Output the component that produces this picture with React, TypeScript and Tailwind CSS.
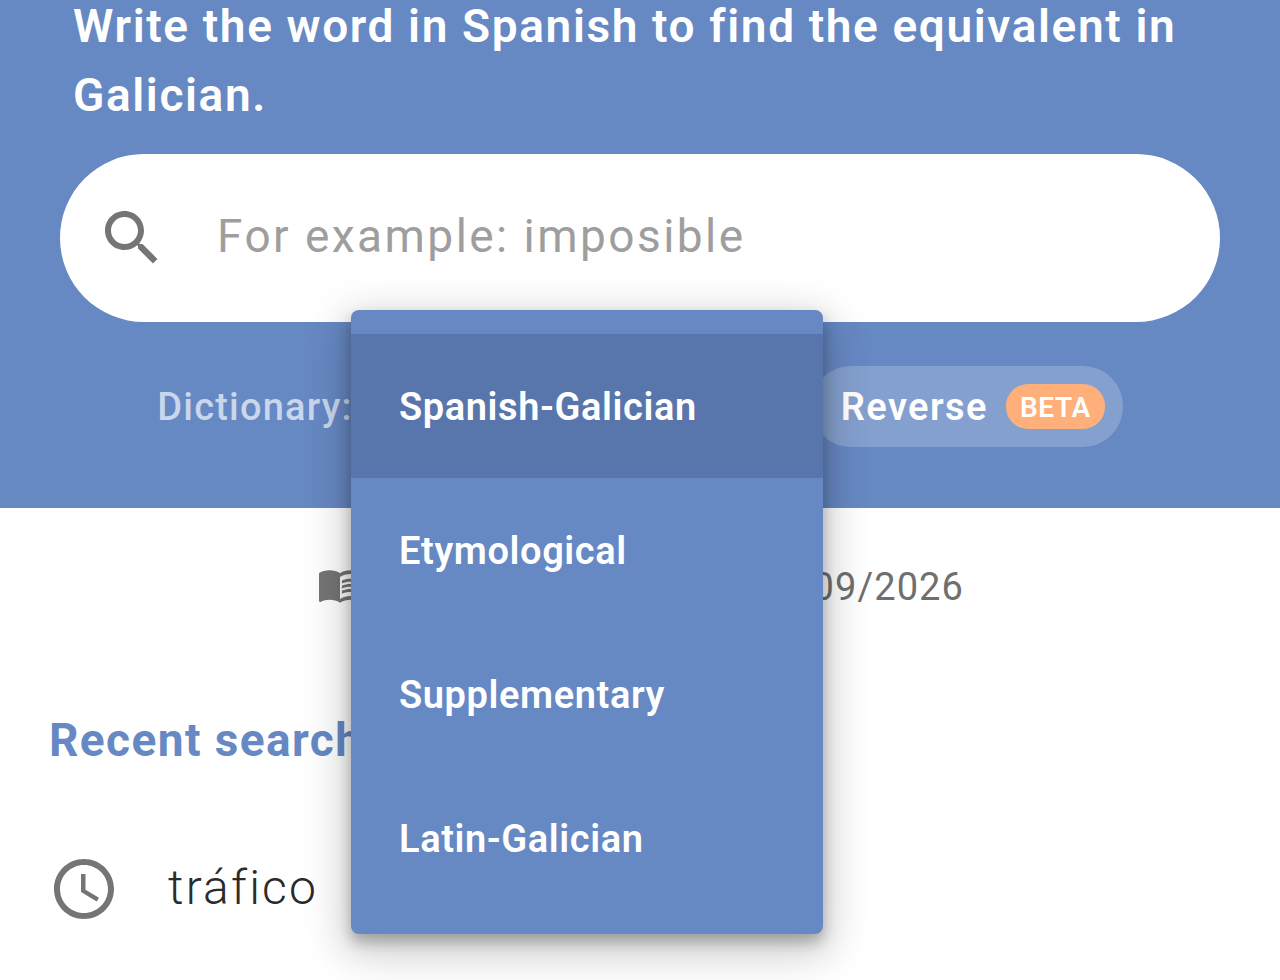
const roboto = "font-['Roboto',sans-serif]";

function SearchIcon() {
  return (
    <svg viewBox="3 3 18 18" className="w-[54px] h-[54px] fill-[#757575]">
      <path d="M15.5 14h-.79l-.28-.27C15.41 12.59 16 11.11 16 9.5 16 5.91 13.09 3 9.5 3S3 5.91 3 9.5 5.91 16 9.5 16c1.61 0 3.09-.59 4.23-1.57l.27.28v.79l5 4.99L20.49 19l-4.99-5zm-6 0C7.01 14 5 11.99 5 9.5S7.01 5 9.5 5 14 7.01 14 9.5 11.99 14 9.5 14z" />
    </svg>
  );
}

function BookIcon() {
  return (
    <svg viewBox="1 4.4 22 17.2" className="w-[42px] h-[33px] fill-[#757575] shrink-0">
      <path d="M21 5c-1.11-.35-2.33-.5-3.5-.5-1.95 0-4.05.4-5.5 1.5-1.45-1.1-3.55-1.5-5.5-1.5S2.45 4.9 1 6v14.65c0 .25.25.5.5.5.1 0 .15-.05.25-.05C3.1 20.45 5.05 20 6.5 20c1.95 0 4.05.4 5.5 1.5 1.35-.85 3.8-1.5 5.5-1.5 1.65 0 3.35.3 4.75 1.05.1.05.15.05.25.05.25 0 .5-.25.5-.5V6c-.6-.45-1.25-.75-2-1zm0 13.5c-1.1-.35-2.3-.5-3.5-.5-1.7 0-4.15.65-5.5 1.5V8c1.35-.85 3.8-1.5 5.5-1.5 1.2 0 2.4.15 3.5.5v11.5z" />
      <path d="M17.5 10.5c.88 0 1.73.09 2.5.26V9.24c-.79-.15-1.64-.24-2.5-.24-1.7 0-3.24.29-4.5.83v1.66c1.13-.64 2.7-.99 4.5-.99zM13 12.49v1.66c1.13-.64 2.7-.99 4.5-.99.88 0 1.73.09 2.5.26V11.9c-.79-.15-1.64-.24-2.5-.24-1.7 0-3.24.3-4.5.83zM17.5 14.33c-1.7 0-3.24.29-4.5.83v1.66c1.13-.64 2.7-.99 4.5-.99.88 0 1.73.09 2.5.26v-1.52c-.79-.16-1.64-.24-2.5-.24z" />
    </svg>
  );
}

function ClockIcon() {
  return (
    <svg viewBox="2 2 20 20" className="w-[60px] h-[60px] fill-[#757575] shrink-0">
      <path d="M11.99 2C6.47 2 2 6.48 2 12s4.47 10 9.99 10C17.52 22 22 17.52 22 12S17.52 2 11.99 2zM12 20c-4.42 0-8-3.58-8-8s3.58-8 8-8 8 3.58 8 8-3.58 8-8 8z" />
      <path d="M12.5 7H11v6l5.25 3.15.75-1.23-4.5-2.67z" />
    </svg>
  );
}

export default function App() {
  const items = ["Spanish-Galician", "Etymological", "Supplementary", "Latin-Galician"];
  return (
    <div className={`relative w-[1280px] h-[980px] overflow-hidden bg-white ${roboto}`}>
      <header className="h-[508px] bg-[#6688c3] flex flex-col">
        <h1 className="-mt-[8px] pl-[73px] pr-[60px] text-[46px] leading-[69px] font-semibold text-white tracking-[1.62px]">
          Write the word in Spanish to find the equivalent in Galician.
        </h1>
        <div className="mt-[24px] mx-[60px] h-[168px] rounded-[84px] bg-white flex items-center pl-[45px]">
          <SearchIcon />
          <span className="ml-[58px] -mt-[3px] text-[46px] text-[#9e9e9e] tracking-[2.45px]">For example: imposible</span>
        </div>
        <div className="mt-[44px] h-[81px] flex items-center justify-center">
          <span className="pt-[1px] text-[38px] font-medium text-[#c9d6ec] tracking-[1.2px]">Dictionary:</span>
          <span className="w-[458px]"></span>
          <div className="h-[81px] w-[312px] rounded-[40px] bg-[#84a0cf] flex items-center pl-[30px]">
            <span className="pt-[1px] text-[38px] font-semibold text-white tracking-[1.4px]">Reverse</span>
            <span className="ml-[18px] pt-[2px] w-[99px] h-[45px] rounded-[22px] bg-[#ffb07a] flex items-center justify-center text-[28px] font-semibold text-white tracking-[0.6px]">BETA</span>
          </div>
        </div>
      </header>

      <div className="mt-[58px] h-[40px] pl-[3px] flex items-center justify-center">
        <BookIcon />
        <span className="ml-[5px] pt-[2px] w-[598px] text-right text-[38px] font-normal text-[#6f6f6f] tracking-[1.1px] whitespace-nowrap">Dictionary updated: 01/09/2026</span>
      </div>

      <h2 className="mt-[107px] ml-[49px] text-[46px] leading-[54px] font-bold text-[#6688c3] tracking-[1.4px]">Recent searches</h2>

      <div className="mt-[92px] ml-[54px] h-[60px] flex items-center">
        <ClockIcon />
        <span className="ml-[54px] -mt-[2px] text-[48px] font-light text-[#2b2b2b] tracking-[2.2px]">tráfico</span>
      </div>

      <div className="absolute left-[351px] top-[310px] w-[472px] h-[624px] pt-[24px] rounded-[8px] bg-[#6688c3] shadow-[0_13px_40px_8px_rgba(0,0,0,0.2),0_8px_14px_rgba(0,0,0,0.25)]">
        {items.map((item, i) => (
          <div
            key={item}
            className={`h-[144px] pl-[48px] pt-[3px] flex items-center text-[38px] font-semibold tracking-[0.6px] text-white ${i === 0 ? "bg-[#5876ac]" : ""}`}
          >
            {item}
          </div>
        ))}
      </div>
    </div>
  );
}
